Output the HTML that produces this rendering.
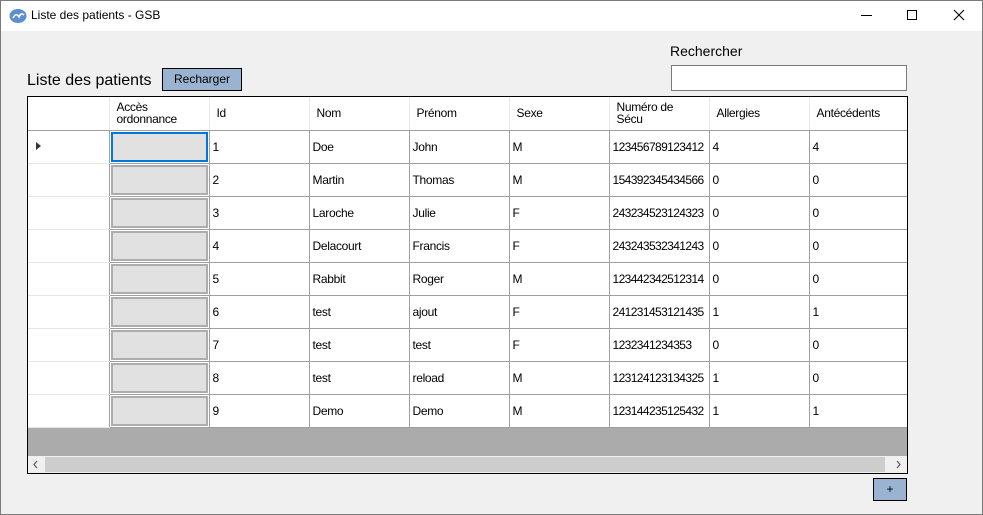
<!DOCTYPE html>
<html><head><meta charset="utf-8"><style>
*{box-sizing:border-box;margin:0;padding:0}
body{width:983px;height:515px;background:#f0f0f0;font-family:"Liberation Sans",sans-serif;position:relative;overflow:hidden}
.frame{position:absolute;left:0;top:0;width:983px;height:515px;border:1px solid #7a7a7a;pointer-events:none;z-index:9}
.title{position:absolute;left:0;top:0;width:983px;height:31px;background:#fff}
.title span{position:absolute;left:31px;top:8px;font-size:12px;color:#000}
.abs{position:absolute}
.grid{position:absolute;left:27px;top:96px;width:881px;height:378px;border:1px solid #000;background:#ababab;overflow:hidden}
table{border-collapse:collapse;table-layout:fixed;position:absolute;left:0;top:0;width:981px;background:#fff}
td{height:33px;border-right:1px solid #a0a0a0;border-bottom:1px solid #a0a0a0;font-size:12px;padding-left:3px;color:#000;white-space:nowrap;overflow:hidden;letter-spacing:-0.3px}
td.n{letter-spacing:-0.6px}
tr.h td{border-right:1px solid #e6e6e6;border-bottom:1px solid #a0a0a0;padding-left:7px;line-height:12px;font-size:12px}
td.rh{border-right:1px solid #a0a0a0;border-bottom:1px solid #e6e6e6;background:#fff}
td.b{padding:1px}
td.b div{width:97px;height:30px;background:#e1e1e1;border:2px solid #adadad}
td.b.sel div{border-color:#0078d7}
.scroll{position:absolute;left:0;top:359px;width:879px;height:17px;background:#f0f0f0}
.btn{position:absolute;background:#9ab3d1;border:1px solid #000;font-size:12px;text-align:center}
</style></head><body>
<div class="frame"></div>
<div class="title">
<svg class="abs" style="left:9px;top:8px" width="18" height="16" viewBox="0 0 18 16"><ellipse cx="9" cy="8" rx="8.5" ry="7" fill="#5b8fcf"/><path d="M4 10 q3-6 6-1 q2-5 5-2" stroke="#fff" stroke-width="1.6" fill="none"/></svg>
<span>Liste des patients - GSB</span>
<div class="abs" style="left:861px;top:15px;width:11px;height:1px;background:#000"></div>
<div class="abs" style="left:907px;top:10px;width:10px;height:10px;border:1px solid #000"></div>
<svg class="abs" style="left:953px;top:9px" width="12" height="12"><path d="M1 1L11 11M11 1L1 11" stroke="#000" stroke-width="1.1"/></svg>
</div>
<div class="abs" style="left:670px;top:43px;font-size:14px">Rechercher</div>
<div class="abs" style="left:671px;top:65px;width:236px;height:26px;background:#fff;border:1px solid #7a7a7a"></div>
<div class="abs" style="left:27px;top:72px;font-size:16px">Liste des patients</div>
<div class="btn" style="left:162px;top:68px;width:80px;height:23px;line-height:21px">Recharger</div>
<div class="grid">
<table>
<colgroup><col style="width:81px"><col style="width:100px"><col style="width:100px"><col style="width:100px"><col style="width:100px"><col style="width:100px"><col style="width:100px"><col style="width:100px"><col style="width:100px"><col style="width:100px"></colgroup>
<tr class="h"><td class="rh" style="border-bottom:1px solid #a0a0a0;border-right:1px solid #e6e6e6"></td><td>Accès<br>ordonnance</td><td>Id</td><td>Nom</td><td>Prénom</td><td>Sexe</td><td>Numéro de<br>Sécu</td><td>Allergies</td><td>Antécédents</td><td></td></tr>
<tr><td class="rh"><svg width="10" height="10" style="margin-left:3px"><path d="M2 1L7 5L2 9Z" fill="#333"/></svg></td><td class="b sel"><div></div></td><td>1</td><td>Doe</td><td>John</td><td>M</td><td class="n">123456789123412</td><td>4</td><td>4</td><td></td></tr>
<tr><td class="rh"></td><td class="b"><div></div></td><td>2</td><td>Martin</td><td>Thomas</td><td>M</td><td class="n">154392345434566</td><td>0</td><td>0</td><td></td></tr>
<tr><td class="rh"></td><td class="b"><div></div></td><td>3</td><td>Laroche</td><td>Julie</td><td>F</td><td class="n">243234523124323</td><td>0</td><td>0</td><td></td></tr>
<tr><td class="rh"></td><td class="b"><div></div></td><td>4</td><td>Delacourt</td><td>Francis</td><td>F</td><td class="n">243243532341243</td><td>0</td><td>0</td><td></td></tr>
<tr><td class="rh"></td><td class="b"><div></div></td><td>5</td><td>Rabbit</td><td>Roger</td><td>M</td><td class="n">123442342512314</td><td>0</td><td>0</td><td></td></tr>
<tr><td class="rh"></td><td class="b"><div></div></td><td>6</td><td>test</td><td>ajout</td><td>F</td><td class="n">241231453121435</td><td>1</td><td>1</td><td></td></tr>
<tr><td class="rh"></td><td class="b"><div></div></td><td>7</td><td>test</td><td>test</td><td>F</td><td class="n">1232341234353</td><td>0</td><td>0</td><td></td></tr>
<tr><td class="rh"></td><td class="b"><div></div></td><td>8</td><td>test</td><td>reload</td><td>M</td><td class="n">123124123134325</td><td>1</td><td>0</td><td></td></tr>
<tr><td class="rh"></td><td class="b"><div></div></td><td>9</td><td>Demo</td><td>Demo</td><td>M</td><td class="n">123144235125432</td><td>1</td><td>1</td><td></td></tr>
</table>
<div class="scroll">
<div class="abs" style="left:17px;top:1px;width:840px;height:15px;background:#cdcdcd"></div>
<svg class="abs" style="left:4px;top:4px" width="8" height="9"><path d="M5 1L2 4.5L5 8" stroke="#606060" stroke-width="1.3" fill="none"/></svg>
<svg class="abs" style="left:866px;top:4px" width="8" height="9"><path d="M3 1L6 4.5L3 8" stroke="#606060" stroke-width="1.3" fill="none"/></svg>
</div>
</div>
<div class="btn" style="left:873px;top:478px;width:34px;height:23px;line-height:21px">+</div>
</body></html>
